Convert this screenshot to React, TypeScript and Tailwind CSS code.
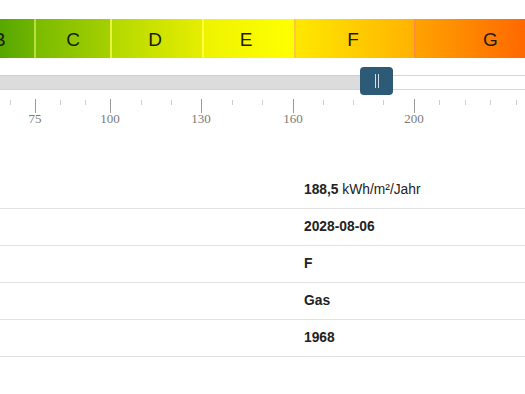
import React from 'react';

// ─── Energy scale data ───────────────────────────────────────────────────────
const classes = [
  { label: 'B', w: 34, from: '#58a600', to: '#6fb600', pos: 'justify-start', shift: 'ml-[-7px]' },
  { label: 'C', w: 76, from: '#7abb00', to: '#a4d000', pos: 'justify-center', shift: '' },
  { label: 'D', w: 92, from: '#b2d800', to: '#e6ee00', pos: 'justify-center', shift: 'mr-[4px]' },
  { label: 'E', w: 92, from: '#eef300', to: '#ffff00', pos: 'justify-center', shift: 'mr-[6px]' },
  { label: 'F', w: 120, from: '#ffe800', to: '#ffb200', pos: 'justify-center', shift: 'mr-[4px]' },
  { label: 'G', w: 111, from: '#ffa200', to: '#ff6800', pos: 'justify-center', shift: 'ml-[40px]' },
];

const majors = [
  { x: 35, v: '75' },
  { x: 110, v: '100' },
  { x: 201, v: '130' },
  { x: 293, v: '160' },
  { x: 414, v: '200' },
];
const minors = [10, 60, 85, 141, 171, 232, 262, 323, 353, 383, 439, 465, 490, 516];

const rows = [
  { strong: '188,5', rest: ' kWh/m²/Jahr' },
  { strong: '2028-08-06' },
  { strong: 'F' },
  { strong: 'Gas' },
  { strong: '1968' },
];

const HANDLE = 376;

export default function App() {
  return (
    <div className="w-[525px] h-[394px] bg-white overflow-hidden" style={{ fontFamily: '"Liberation Sans", Arial, sans-serif' }}>
      {/* Colour bar */}
      <div className="mt-[19px] h-[39px] flex">
        {classes.map((c, i) => (
          <div
            key={c.label}
            className={`shrink-0 flex items-center pt-[4px] text-[19px] text-[#1c1c0c] ${c.pos} ${i > 0 ? 'border-l-2 border-white/25' : ''}`}
            style={{ width: c.w, background: `linear-gradient(90deg, ${c.from}, ${c.to})` }}
          >
            <span className={c.shift}>{c.label}</span>
          </div>
        ))}
      </div>

      {/* Slider track */}
      <div className="relative mt-[17px] h-[15px] flex">
        <div className="h-full bg-[#dcdcdc] border-y border-[#cfcfcf]" style={{ width: HANDLE }} />
        <div className="flex-1 h-full bg-white border-y border-[#d6d6d6]" />
        <div className="absolute left-[360px] top-[-8px] w-[33px] h-[28px] rounded-[4px] bg-[#2d5a76] flex items-center justify-center gap-[2px]">
          <div className="w-px h-[14px] bg-white/80" />
          <div className="w-px h-[14px] bg-white/80" />
        </div>
      </div>

      {/* Ticks */}
      <svg width={525} height={30} className="mt-[9px] block">
        {minors.map(x => (
          <line key={x} x1={x + 0.5} x2={x + 0.5} y1={1} y2={6} stroke="#cfcfcf" strokeWidth={1} />
        ))}
        {majors.map(m => (
          <g key={m.v}>
            <line x1={m.x + 0.5} x2={m.x + 0.5} y1={0} y2={14} stroke="#999" strokeWidth={1} />
            <text x={m.x} y={24} textAnchor="middle" fontSize={13} fill="#7a7a7a" style={{ fontFamily: '"Liberation Serif", "Times New Roman", serif' }}>
              {m.v}
            </text>
          </g>
        ))}
      </svg>

      {/* Details table */}
      <div className="mt-[43px]">
        {rows.map((r, i) => (
          <div key={i} className="grid grid-cols-[304px_1fr] h-[37px] border-b-[1.5px] border-[#e2e2e2] items-center text-[13.8px] text-[#222]">
            <div />
            <div>
              <span className="font-bold">{r.strong}</span>
              {r.rest && <span>{r.rest}</span>}
            </div>
          </div>
        ))}
      </div>
    </div>
  );
}
